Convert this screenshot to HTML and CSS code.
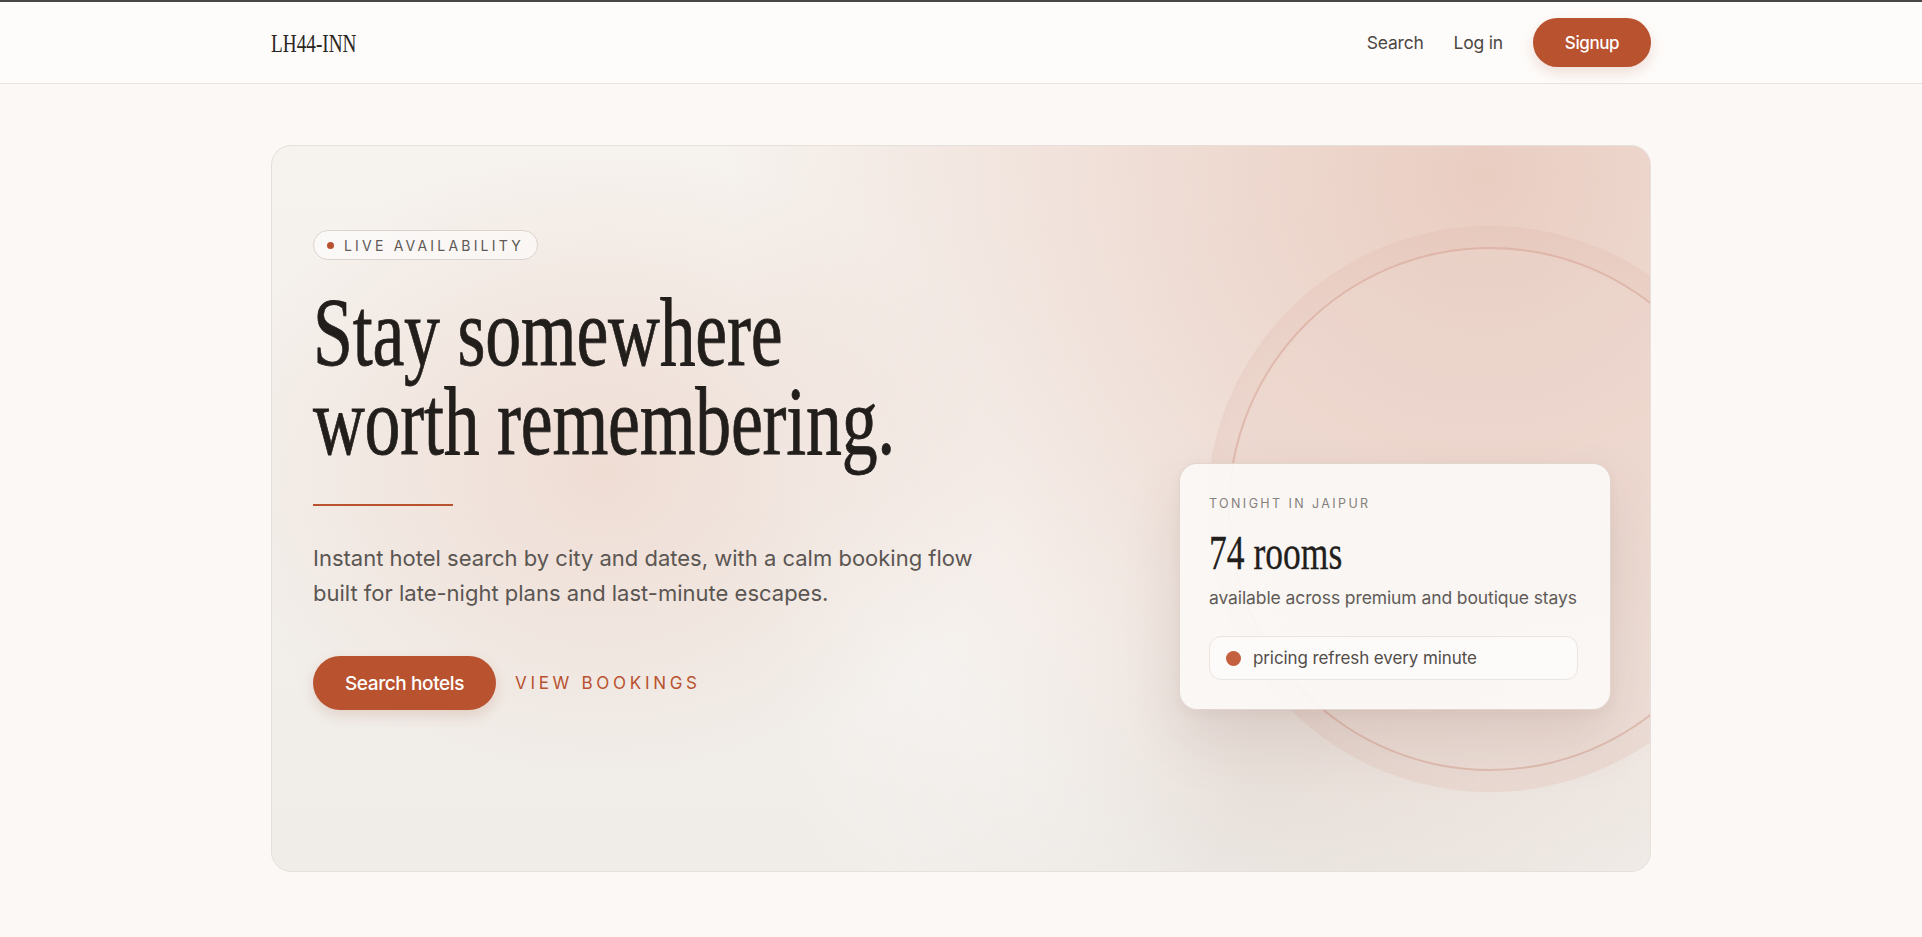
FILE: index.html
```html
<!DOCTYPE html>
<html lang="en">
<head>
    <meta charset="UTF-8">
    <meta name="viewport" content="width=device-width, initial-scale=1.0">
    <title>LH44-INN</title>
    <link rel="stylesheet" href="styles.css">
</head>
<body>
    <header class="site-header">
        <div class="wrap header-row">
            <a class="logo" href="#"><span class="cond">LH44-INN</span></a>
            <nav class="nav">
                <a class="nav-link" href="#">Search</a>
                <a class="nav-link" href="#">Log in</a>
                <a class="btn btn-small" href="#">Signup</a>
            </nav>
        </div>
    </header>

    <main class="wrap">
        <section class="hero">
            <!-- decorative ring behind the stats card -->
            <div class="ring"><div class="ring-line"></div></div>

            <div class="hero-copy">
                <div class="badge"><span class="badge-dot"></span>LIVE AVAILABILITY</div>
                <h1 class="hero-title">
                    <span class="cond title-line">Stay somewhere</span>
                    <span class="cond title-line">worth remembering.</span>
                </h1>
                <div class="divider"></div>
                <p class="hero-text">Instant hotel search by city and dates, with a calm booking flow<br>built for late-night plans and last-minute escapes.</p>
                <div class="hero-actions">
                    <a class="btn btn-large" href="#">Search hotels</a>
                    <a class="link-caps" href="#">VIEW BOOKINGS</a>
                </div>
            </div>

            <div class="stat-card">
                <div class="stat-label">TONIGHT IN JAIPUR</div>
                <div class="stat-value"><span class="cond">74 rooms</span></div>
                <div class="stat-sub">available across premium and boutique stays</div>
                <div class="stat-pill"><span class="pill-dot"></span>pricing refresh every minute</div>
            </div>
        </section>
    </main>
</body>
</html>
```

FILE: styles.css
```css
body {
    margin: 0;
    background-color: #fbf8f5;
    font-family: Inter, "Noto Sans", sans-serif;
    color: #2a2623;
    border-top: 2px solid #4a4744;
}
a {
    text-decoration: none;
    color: inherit;
}
.wrap {
    width: 1380px;
    margin: 0 auto;
}
/* condensed serif look */
.cond {
    display: inline-block;
    font-family: "Liberation Serif", serif;
    transform: scaleX(0.74);
    transform-origin: left center;
    white-space: nowrap;
}

/* Header */
.site-header {
    background-color: #fefcfa;
    border-bottom: 1px solid #e9e4e0;
}
.header-row {
    height: 81px;
    display: flex;
    align-items: center;
    justify-content: space-between;
}
.logo {
    font-size: 26px;
    color: #2b2622;
    width: 90px;
}
.nav {
    display: flex;
    align-items: center;
    gap: 30px;
}
.nav-link {
    font-size: 17.5px;
    color: #4d4844;
    letter-spacing: -0.2px;
}
.btn {
    display: inline-flex;
    align-items: center;
    justify-content: center;
    background-color: #b9522f;
    color: #fff;
    border-radius: 999px;
    font-weight: 500;
    letter-spacing: -0.4px;
    box-shadow: 0 6px 14px rgba(150, 70, 40, 0.16);
}
.btn-small {
    width: 118px;
    height: 49px;
    font-size: 17px;
}
.btn-large {
    width: 183px;
    height: 54px;
    font-size: 19px;
}

/* Hero */
main {
    padding-top: 61px;
}
.hero {
    position: relative;
    overflow: hidden;
    box-sizing: border-box;
    min-height: 727px;
    border: 1px solid #e6dfda;
    border-radius: 20px;
    padding: 79px 39px 161px 41px;
    display: grid;
    grid-template-columns: 1fr 432px;
    align-items: end;
    background:
        radial-gradient(circle at 88% 4%, rgba(233, 203, 191, 0.95), rgba(233, 203, 191, 0) 54%),
        radial-gradient(ellipse 400px 320px at 24% 45%, rgba(238, 216, 206, 0.8), rgba(238, 216, 206, 0) 100%),
        radial-gradient(ellipse 260px 500px at 54% 55%, rgba(250, 248, 246, 0.7), rgba(250, 248, 246, 0) 100%),
        radial-gradient(ellipse 420px 220px at 72% 90%, rgba(222, 214, 208, 0.45), rgba(222, 214, 208, 0) 100%),
        linear-gradient(180deg, #f6f2ee 0%, #f0ede9 100%);
}
.ring {
    position: absolute;
    left: 935px;
    top: 80px;
    width: 566px;
    height: 566px;
    border-radius: 50%;
    background: rgba(226, 186, 172, 0.17);
    box-shadow: inset 0 0 30px rgba(226, 186, 172, 0.2);
}
.ring-line {
    position: absolute;
    inset: 21px;
    border-radius: 50%;
    border: 2px solid rgba(214, 160, 145, 0.55);
    background: rgba(240, 222, 214, 0.25);
}
.hero-copy {
    position: relative;
}
.badge {
    display: inline-flex;
    align-items: center;
    gap: 10px;
    height: 30px;
    box-sizing: border-box;
    padding: 0 13px 0 13px;
    border: 1px solid #dcd3cd;
    border-radius: 999px;
    background: rgba(255, 255, 255, 0.55);
    font-size: 14px;
    letter-spacing: 3.2px;
    color: #5f5a56;
}
.badge-dot {
    width: 7px;
    height: 7px;
    border-radius: 50%;
    background: #b9522f;
}
.hero-title {
    margin: 28px 0 0;
    font-weight: 400;
    font-size: 97px;
    line-height: 89px;
    color: #221e1b;
    letter-spacing: -0.3px;
    -webkit-text-stroke: 0.8px #221e1b;
}
.title-line {
    display: block;
}
.divider {
    width: 140px;
    height: 2px;
    background: #b9522f;
    margin-top: 38px;
}
.hero-text {
    margin: 35px 0 0;
    font-size: 22px;
    line-height: 35px;
    color: #5b5652;
    letter-spacing: 0;
}
.hero-actions {
    margin-top: 45px;
    display: flex;
    align-items: center;
    gap: 19px;
}
.link-caps {
    font-size: 17px;
    letter-spacing: 3.7px;
    color: #b9522f;
}

/* Stats card */
.stat-card {
    position: relative;
    box-sizing: border-box;
    height: 247px;
    padding: 32px 29px 0 29px;
    border: 1px solid rgba(222, 208, 200, 0.9);
    border-radius: 18px;
    background: rgba(251, 248, 246, 0.92);
    box-shadow: 0 30px 60px rgba(90, 60, 50, 0.12), 0 4px 12px rgba(90, 60, 50, 0.05);
}
.stat-label {
    font-size: 12.5px;
    letter-spacing: 2.4px;
    color: #85807b;
    line-height: 16px;
}
.stat-value {
    margin-top: 15px;
    font-size: 48px;
    line-height: 50px;
    color: #221e1b;
    -webkit-text-stroke: 0.3px #221e1b;
}
.stat-sub {
    margin-top: 9px;
    font-size: 17.5px;
    line-height: 22px;
    color: #605b57;
    letter-spacing: -0.1px;
}
.stat-pill {
    margin-top: 27px;
    box-sizing: border-box;
    height: 44px;
    width: 369px;
    display: flex;
    align-items: center;
    gap: 12px;
    padding: 0 16px;
    border: 1px solid #ebe4df;
    border-radius: 12px;
    background: #fdfbfa;
    font-size: 17px;
    color: #524d49;
    letter-spacing: -0.1px;
}
.pill-dot {
    width: 15px;
    height: 15px;
    border-radius: 50%;
    background: #c4603e;
}
```
